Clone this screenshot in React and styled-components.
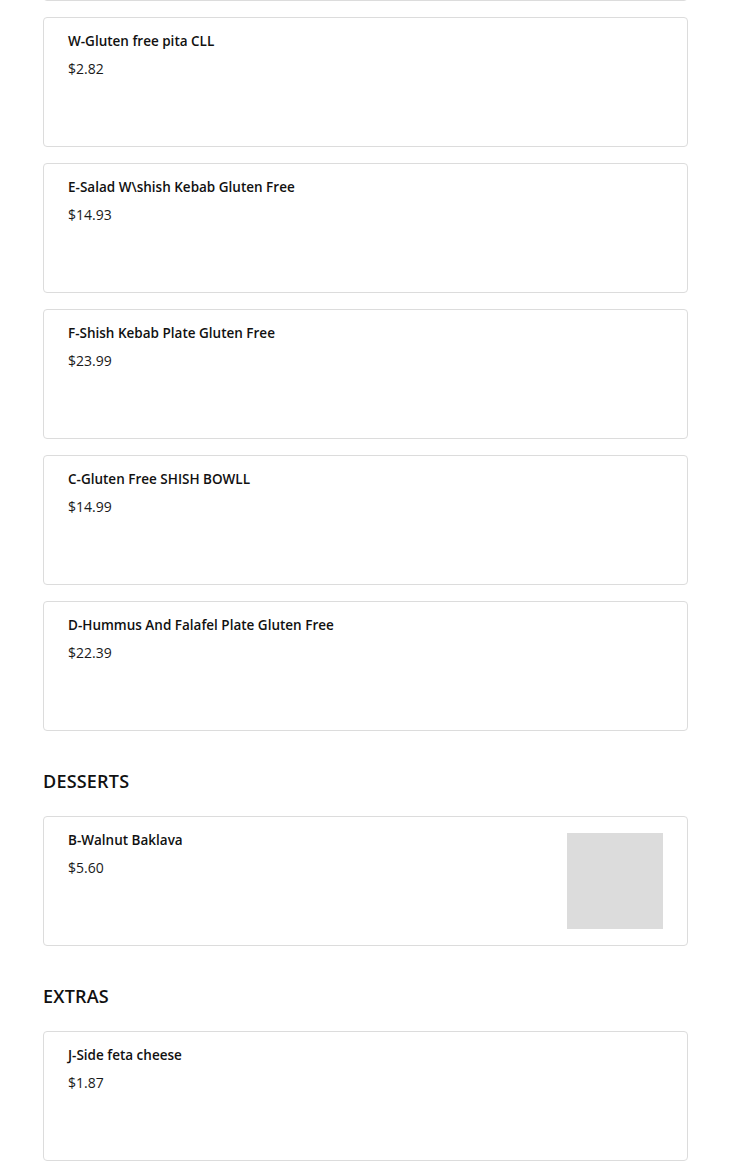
import React from 'react';
import styled, { createGlobalStyle } from 'styled-components';

const GlobalStyle = createGlobalStyle`
    html, body {
        margin: 0;
        padding: 0;
        background: #fff;
    }
    body {
        font-family: "Open Sans", "Liberation Sans", sans-serif;
        color: #1a1a1a;
        overflow: hidden;
    }
`;

const Page = styled.div`
    width: 645px;
    margin-left: 43px;
    /* scrolled: the previous card is above the fold */
    margin-top: -129px;
`;

const Section = styled.section`
    display: flex;
    flex-direction: column;
    gap: 16px;
`;

const SectionTitle = styled.h2`
    font-size: 18px;
    font-weight: 600;
    line-height: 24px;
    margin: 38px 0 23px;
    color: #111;
    letter-spacing: 0.2px;
`;

const Card = styled.div`
    box-sizing: border-box;
    display: flex;
    justify-content: space-between;
    gap: 16px;
    min-height: 130px;
    padding: 16px 24px;
    border: 1px solid #dcdcdc;
    border-radius: 4px;
    background: #fff;
`;

const Info = styled.div`
    display: flex;
    flex-direction: column;
`;

const Name = styled.h4`
    margin: 0 0 12px;
    font-size: 13.5px;
    font-weight: 600;
    line-height: 14px;
    color: #111;
`;

const Price = styled.div`
    font-size: 14px;
    line-height: 18px;
    color: #1a1a1a;
`;

const Thumb = styled.div`
    flex: none;
    width: 96px;
    height: 96px;
    background: #dcdcdc;
`;

const mains = [
    { name: 'W-Gluten free pita CLL', price: '$2.82' },
    { name: 'E-Salad W\\shish Kebab Gluten Free', price: '$14.93' },
    { name: 'F-Shish Kebab Plate Gluten Free', price: '$23.99' },
    { name: 'C-Gluten Free SHISH BOWLL', price: '$14.99' },
    { name: 'D-Hummus And Falafel Plate Gluten Free', price: '$22.39' },
];

const MenuItem = ({ name, price, image }) => (
    <Card>
        {name ? (
            <Info>
                <Name>{name}</Name>
                <Price>{price}</Price>
            </Info>
        ) : <Info />}
        {image && <Thumb />}
    </Card>
);

const App = () => (
    <>
        <GlobalStyle />
        <Page>
            <Section>
                <MenuItem />
                {mains.map((item) => (
                    <MenuItem key={item.name} {...item} />
                ))}
            </Section>

            <SectionTitle>DESSERTS</SectionTitle>
            <Section>
                <MenuItem name="B-Walnut Baklava" price="$5.60" image />
            </Section>

            <SectionTitle>EXTRAS</SectionTitle>
            <Section>
                <MenuItem name="J-Side feta cheese" price="$1.87" />
            </Section>
        </Page>
    </>
);

export default App;
